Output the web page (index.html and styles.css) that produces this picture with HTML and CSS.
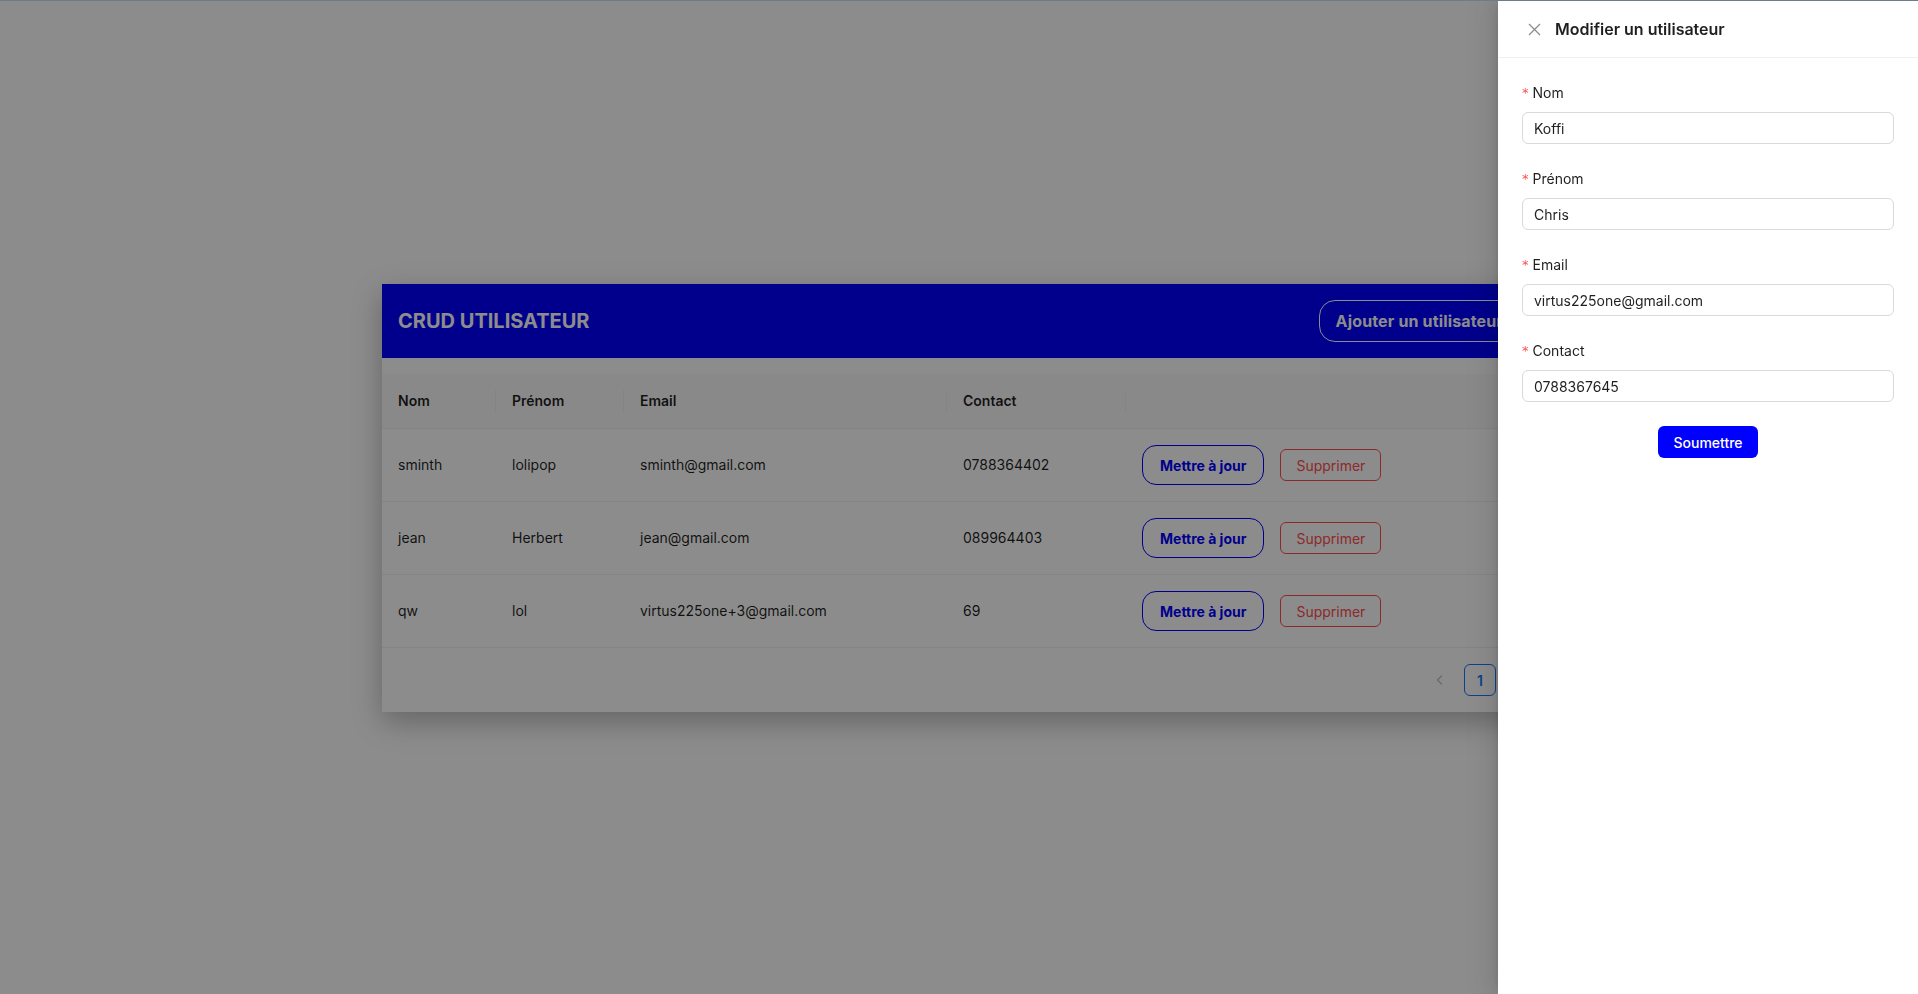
FILE: index.html
```html
<!DOCTYPE html>
<html lang="fr">
<head>
<meta charset="utf-8">
<title>CRUD Utilisateur</title>
<link rel="stylesheet" href="styles.css">
</head>
<body>
<div class="top-line"></div>
<main class="page">
  <section class="card">
    <header class="card-head">
      <h1 class="card-title">CRUD UTILISATEUR</h1>
      <button class="btn-add">Ajouter un utilisateur</button>
    </header>
    <div class="table-wrap">
      <table class="table">
        <colgroup>
          <col class="c1"><col class="c2"><col class="c3"><col class="c4"><col class="c5">
        </colgroup>
        <thead>
          <tr><th>Nom</th><th>Prénom</th><th>Email</th><th>Contact</th><th></th></tr>
        </thead>
        <tbody>
          <tr>
            <td>sminth</td><td>lolipop</td><td>sminth@gmail.com</td><td>0788364402</td>
            <td><div class="actions"><button class="btn-update">Mettre à jour</button><button class="btn-delete">Supprimer</button></div></td>
          </tr>
          <tr>
            <td>jean</td><td>Herbert</td><td>jean@gmail.com</td><td>089964403</td>
            <td><div class="actions"><button class="btn-update">Mettre à jour</button><button class="btn-delete">Supprimer</button></div></td>
          </tr>
          <tr>
            <td>qw</td><td>lol</td><td>virtus225one+3@gmail.com</td><td>69</td>
            <td><div class="actions"><button class="btn-update">Mettre à jour</button><button class="btn-delete">Supprimer</button></div></td>
          </tr>
        </tbody>
      </table>
      <nav class="pagination">
        <span class="page-nav disabled">
          <svg width="12" height="12" viewBox="0 0 12 12"><path d="M8 1.5 3.5 6 8 10.5" fill="none" stroke="currentColor" stroke-width="1.2"/></svg>
        </span>
        <span class="page-item active">1</span>
        <span class="page-nav disabled">
          <svg width="12" height="12" viewBox="0 0 12 12"><path d="M4 1.5 8.5 6 4 10.5" fill="none" stroke="currentColor" stroke-width="1.2"/></svg>
        </span>
      </nav>
    </div>
  </section>
</main>
<div class="mask"></div>
<aside class="drawer">
  <div class="drawer-head">
    <button class="drawer-close" aria-label="Fermer">
      <svg width="13" height="13" viewBox="0 0 13 13"><path d="M1 1 12 12M12 1 1 12" stroke="currentColor" stroke-width="1.3" fill="none"/></svg>
    </button>
    <div class="drawer-title">Modifier un utilisateur</div>
  </div>
  <form class="drawer-body">
    <div class="form-item">
      <label class="form-label"><span class="req">*</span>Nom</label>
      <input class="input" value="Koffi">
    </div>
    <div class="form-item">
      <label class="form-label"><span class="req">*</span>Prénom</label>
      <input class="input" value="Chris">
    </div>
    <div class="form-item">
      <label class="form-label"><span class="req">*</span>Email</label>
      <input class="input" value="virtus225one@gmail.com">
    </div>
    <div class="form-item">
      <label class="form-label"><span class="req">*</span>Contact</label>
      <input class="input" value="0788367645">
    </div>
    <div class="form-submit">
      <button type="button" class="btn-submit">Soumettre</button>
    </div>
  </form>
</aside>
</body>
</html>
```
FILE: styles.css
```css
* { box-sizing: border-box; }
html, body { margin: 0; padding: 0; }
body {
  font-family: Inter, "Noto Sans", "Liberation Sans", sans-serif;
  font-size: 14px;
  color: rgba(0,0,0,0.88);
  background: #fff;
  overflow: hidden;
}
button { font-family: inherit; cursor: pointer; }

.top-line {
  position: fixed;
  top: 0; left: 0; right: 0;
  height: 1px;
  background: #6c7c89;
  z-index: 100;
}

.page {
  min-height: 100vh;
  padding-top: 2px;
  display: flex;
  align-items: center;
  justify-content: center;
}

.card {
  width: 1154px;
  background: #fff;
  box-shadow: 0 10px 28px rgba(0,0,0,0.28);
}

.card-head {
  height: 74px;
  background: #0000ff;
  display: flex;
  align-items: center;
  justify-content: space-between;
  padding: 0 16px;
}
.card-title {
  margin: 0;
  font-size: 20px;
  font-weight: 700;
  color: #fff;
  letter-spacing: 0;
}
.btn-add {
  height: 42px;
  padding: 0 16px;
  background: transparent;
  border: 1px solid #fff;
  border-radius: 16px;
  color: #fff;
  font-size: 16px;
  font-weight: 700;
  letter-spacing: 0.15px;
}

.table-wrap { padding-top: 16px; }
.table {
  width: 100%;
  border-collapse: collapse;
  table-layout: fixed;
}
.c1 { width: 114px; }
.c2 { width: 128px; }
.c3 { width: 323px; }
.c4 { width: 179px; }
.table th {
  text-align: left;
  font-weight: 600;
  padding: 16px;
  line-height: 22px;
  background: linear-gradient(#f0f0f0, #f0f0f0) right center / 1px 22px no-repeat, #fafafa;
  border-bottom: 1px solid #f0f0f0;
}
.table th:last-child { background: #fafafa; }
.table td {
  padding: 16px;
  line-height: 22px;
  border-bottom: 1px solid #f0f0f0;
}
.actions {
  display: flex;
  align-items: center;
  gap: 16px;
}
.btn-update {
  height: 40px;
  padding: 0 17px;
  border: 1px solid #0000ff;
  border-radius: 14px;
  background: #fff;
  color: #0000ff;
  font-size: 14px;
  font-weight: 700;
}
.btn-delete {
  height: 32px;
  padding: 0 15px;
  border: 1px solid #ff4d4f;
  border-radius: 6px;
  background: #fff;
  color: #ff4d4f;
  font-size: 14px;
}

.pagination {
  display: flex;
  justify-content: flex-end;
  gap: 8px;
  padding: 16px 0;
}
.page-nav, .page-item {
  width: 32px;
  height: 32px;
  display: flex;
  align-items: center;
  justify-content: center;
  border-radius: 6px;
}
.page-nav.disabled { color: rgba(0,0,0,0.25); }
.page-item.active {
  border: 1px solid #1677ff;
  color: #1677ff;
  font-weight: 600;
}

.mask {
  position: fixed;
  inset: 0;
  background: rgba(0,0,0,0.45);
  z-index: 10;
}

.drawer {
  position: fixed;
  top: 0; right: 0; bottom: 0;
  width: 420px;
  background: #fff;
  z-index: 20;
  box-shadow: -6px 0 16px 0 rgba(0,0,0,0.08), -3px 0 6px -4px rgba(0,0,0,0.12), -9px 0 28px 8px rgba(0,0,0,0.05);
  display: flex;
  flex-direction: column;
}
.drawer-head {
  height: 58px;
  display: flex;
  align-items: center;
  padding: 1px 24px 0;
  border-bottom: 1px solid rgba(5,5,5,0.06);
}
.drawer-close {
  width: 24px;
  height: 24px;
  padding: 0;
  border: 0;
  background: transparent;
  color: rgba(0,0,0,0.45);
  display: flex;
  align-items: center;
  justify-content: center;
  margin-right: 9px;
}
.drawer-title {
  font-size: 16px;
  font-weight: 600;
  line-height: 24px;
}
.drawer-body {
  padding: 24px;
}
.form-item { margin-bottom: 24px; }
.form-label {
  display: block;
  height: 30px;
  line-height: 22px;
  padding-bottom: 8px;
  font-size: 14px;
  overflow: visible;
}
.req {
  display: inline-block;
  color: #ff4d4f;
  font-family: "DejaVu Sans", sans-serif;
  font-size: 13px;
  line-height: 1;
  vertical-align: top;
  margin-top: 4px;
  margin-right: 4px;
}
.input {
  display: block;
  width: 100%;
  height: 32px;
  padding: 4px 11px;
  border: 1px solid #d9d9d9;
  border-radius: 6px;
  font-family: inherit;
  font-size: 14px;
  color: rgba(0,0,0,0.88);
  background: #fff;
  outline: none;
}
.form-submit {
  display: flex;
  justify-content: center;
}
.btn-submit {
  height: 32px;
  padding: 0 15px;
  border: 0;
  border-radius: 6px;
  background: #0000ff;
  color: #fff;
  font-size: 14px;
  font-weight: 500;
}
```
